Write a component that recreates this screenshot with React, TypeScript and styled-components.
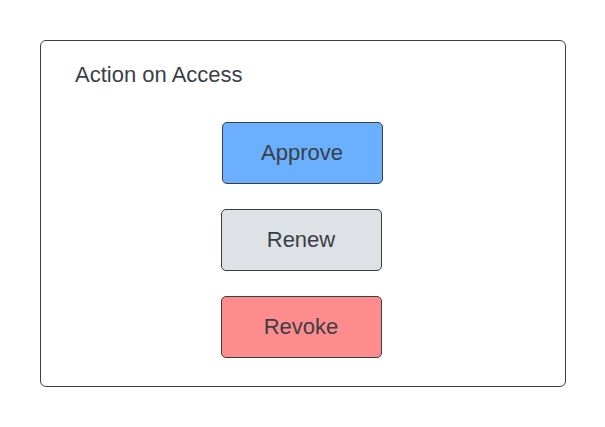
import React from "react";
import styled, { createGlobalStyle } from "styled-components";

const Global = createGlobalStyle`
  html, body { margin: 0; padding: 0; background: #ffffff; }
  body { font-family: "Liberation Sans", Arial, sans-serif; }
`;

const Page = styled.div`
  width: 605px;
  height: 427px;
  padding: 40px 0 0 40px;
  box-sizing: border-box;
`;

const Card = styled.section`
  width: 526px;
  height: 347px;
  box-sizing: border-box;
  border: 1px solid #3d3f44;
  border-radius: 6px;
  padding: 21px 0 0 34px;
  display: flex;
  flex-direction: column;
`;

const Title = styled.h2`
  margin: 0;
  font-size: 22px;
  line-height: 25px;
  font-weight: 400;
  color: #3a3f47;
`;

const Actions = styled.div`
  display: flex;
  flex-direction: column;
  align-items: center;
  gap: 25px;
  margin-top: 35px;
  margin-left: -38px;
`;

type Tone = "approve" | "renew" | "revoke";
const fills: Record<Tone, string> = {
  approve: "#6bafff",
  renew: "#dee1e6",
  revoke: "#ff8c8c",
};

const ActionButton = styled.button<{ $tone: Tone; $shift?: number }>`
  width: 161px;
  height: 62px;
  box-sizing: border-box;
  border: 1px solid #3a3d42;
  border-radius: 5px;
  background: ${(p) => fills[p.$tone]};
  font-family: "Liberation Sans", Arial, sans-serif;
  font-size: 22px;
  color: #3a3f47;
  display: flex;
  align-items: center;
  justify-content: center;
  padding: 0;
  transform: translateX(${(p) => p.$shift ?? 0}px);
`;

export default function App() {
  return (
    <>
      <Global />
      <Page>
        <Card>
          <Title>Action on Access</Title>
          <Actions>
            <ActionButton $tone="approve" $shift={1}>Approve</ActionButton>
            <ActionButton $tone="renew">Renew</ActionButton>
            <ActionButton $tone="revoke">Revoke</ActionButton>
          </Actions>
        </Card>
      </Page>
    </>
  );
}
